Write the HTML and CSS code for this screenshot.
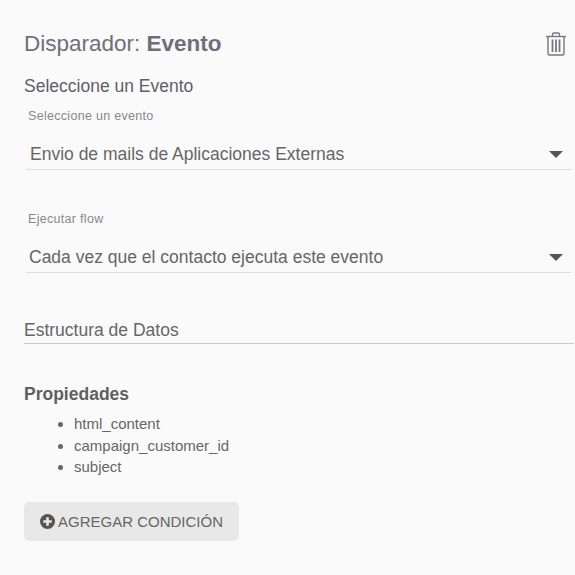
FILE: index.html
```html
<!DOCTYPE html>
<html lang="en">
  <head>
    <meta charset="UTF-8" />
    <title>Disparador</title>
    <link rel="stylesheet" href="styles.css">
  </head>
  <body>
    <div class="panel">
      <div class="top">
        <h2 class="title">Disparador: <b>Evento</b></h2>
        <svg class="trash" width="22" height="24" viewBox="0 0 22 24" fill="none" stroke="#77757f" stroke-width="1.4">
          <path d="M1 4.5h20" />
          <path d="M7.5 4.5V2.6Q7.5 1 9 1h4q1.5 0 1.5 1.6v1.9" />
          <path d="M3 4.5v17q0 1.5 1.5 1.5h13q1.5 0 1.500-1.500v-17" />
          <path d="M7.500 7.500v12.500M11 7.500v12.500M14.500 7.500v12.500" stroke-width="1.800" />
        </svg>
      </div>
      <h3 class="sub">Seleccione un Evento</h3>

      <div class="field first">
        <label class="lab">Seleccione un evento</label>
        <div class="sel"><span>Envio de mails de Aplicaciones Externas</span><i class="caret"></i></div>
      </div>
      <div class="field second">
        <label class="lab">Ejecutar flow</label>
        <div class="sel"><span>Cada vez que el contacto ejecuta este evento</span><i class="caret"></i></div>
      </div>

      <h3 class="struct">Estructura de Datos</h3>
      <h4 class="props">Propiedades</h4>
      <ul class="list">
        <li>html_content</li>
        <li>campaign_customer_id</li>
        <li>subject</li>
      </ul>
      <button class="add">
        <svg width="15" height="15" viewBox="0 0 16 16">
          <circle cx="8" cy="8" r="8" fill="#555" />
          <path d="M8 3.500v9M3.500 8h9" stroke="#e8e8e8" stroke-width="2.800" />
        </svg>
        AGREGAR CONDICIÓN
      </button>
    </div>
  </body>
</html>
```

FILE: styles.css
```css
body {
  margin: 0;
  background-color: #fafafa;
  font-family: "Liberation Sans", Arial, sans-serif;
  color: #666;
}
.panel {
  padding: 30px 1px 0 24px;
}
.top {
  display: flex;
  justify-content: space-between;
  align-items: flex-start;
  padding-right: 7px;
}
.title {
  margin: 0;
  font-size: 22.500px;
  font-weight: normal;
  line-height: 28px;
  color: #6f6f78;
}
.trash {
  margin-top: 2px;
}
.sub {
  margin: 16px 0 0;
  font-size: 17.500px;
  font-weight: normal;
  line-height: 24px;
  color: #5f5f68;
}
.field {
  margin-left: 2px;
  margin-right: 3px;
}
.first {
  margin-top: 10px;
}
.second {
  margin-top: 41px;
}
.lab {
  display: block;
  font-size: 12.500px;
  letter-spacing: 0.3px;
  line-height: 16px;
  padding-left: 2px;
  color: #888;
}
.sel {
  display: flex;
  justify-content: space-between;
  align-items: center;
  height: 38px;
  margin-top: 7px;
  padding: 0 1px 0 4px;
  border-bottom: 1px solid #ddd;
  font-size: 17.500px;
  color: #666;
}
.second .sel {
  padding-left: 3px;
}
.sel span {
  padding-top: 8px;
}
.caret {
  width: 0;
  height: 0;
  margin-top: 8px;
  margin-right: 7px;
  border-left: 7px solid transparent;
  border-right: 7px solid transparent;
  border-top: 7px solid #555;
}
.struct {
  margin: 44px 0 0;
  height: 26px;
  font-size: 17.500px;
  font-weight: normal;
  line-height: 27px;
  color: #666;
  border-bottom: 1px solid #ccc;
}
.props {
  margin: 38px 0 0;
  font-size: 17.500px;
  line-height: 24px;
  color: #5f5f5f;
}
.list {
  margin: 7px 0 0;
  padding-left: 50px;
  font-size: 15px;
  line-height: 21.500px;
  color: #666;
}
.add {
  display: flex;
  align-items: center;
  gap: 3px;
  margin-top: 24px;
  width: 215px;
  height: 39px;
  padding: 0 0 0 16px;
  border: none;
  border-radius: 5px;
  background-color: #e8e8e8;
  font-family: inherit;
  font-size: 15px;
  color: #666;
}
```
